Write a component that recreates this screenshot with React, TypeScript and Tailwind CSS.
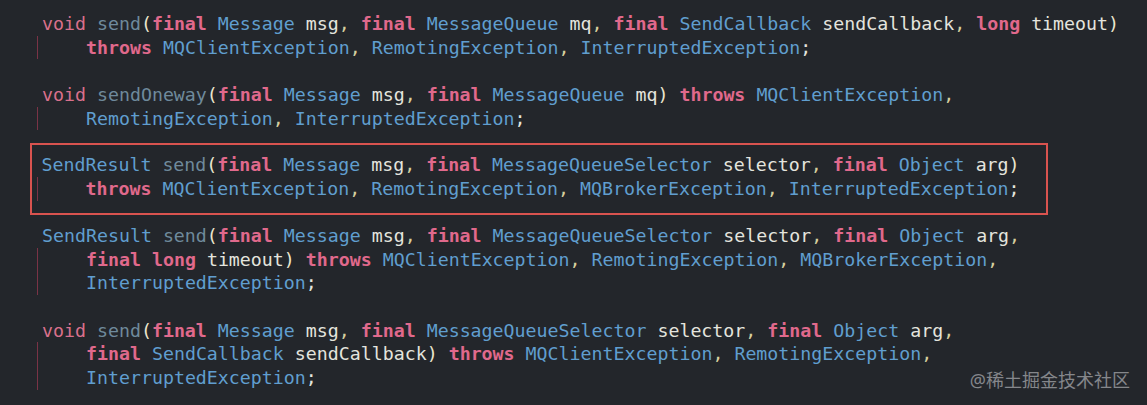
import { JSX } from "react";

type Kind = "kw" | "kwb" | "type" | "fn" | "id" | "paren" | "comma" | "semi" | "space";

const KEYWORDS = new Set(["void"]);
const BOLD_KEYWORDS = new Set(["final", "throws", "long"]);
const METHODS = new Set(["send", "sendOneway"]);

const kindClass: Record<Kind, string> = {
  kw: "text-[#d9708c]",
  kwb: "text-[#e0698c] font-semibold",
  type: "text-[#609ecf]",
  fn: "text-[#6f8a9c]",
  id: "text-[#e4e4de]",
  paren: "text-[#ece6cf]",
  comma: "text-[#d6cf9e]",
  semi: "text-[#e4e4de]",
  space: "",
};

function tokenize(line: string): { text: string; kind: Kind }[] {
  const parts = line.match(/[A-Za-z_]+|\s+|[(),;]/g) ?? [];
  return parts.map((text) => {
    if (/^\s+$/.test(text)) return { text, kind: "space" };
    if (text === "(" || text === ")") return { text, kind: "paren" };
    if (text === ",") return { text, kind: "comma" };
    if (text === ";") return { text, kind: "semi" };
    if (KEYWORDS.has(text)) return { text, kind: "kw" };
    if (BOLD_KEYWORDS.has(text)) return { text, kind: "kwb" };
    if (METHODS.has(text)) return { text, kind: "fn" };
    if (/^[A-Z]/.test(text)) return { text, kind: "type" };
    return { text, kind: "id" };
  });
}

function CodeLine({ line }: { line: string }): JSX.Element {
  return (
    <div className="h-[23.67px] whitespace-pre">
      {tokenize(line).map((t, i) => (
        <span key={i} className={kindClass[t.kind]}>
          {t.text}
        </span>
      ))}
    </div>
  );
}

function Block({ lines }: { lines: string[] }): JSX.Element {
  const [first, ...rest] = lines;
  return (
    <div>
      <CodeLine line={first} />
      <div className="-ml-[5px] border-l border-[#7a3346] pl-[48px]">
        {rest.map((l, i) => (
          <CodeLine key={i} line={l} />
        ))}
      </div>
    </div>
  );
}

const blocks: string[][] = [
  [
    "void send(final Message msg, final MessageQueue mq, final SendCallback sendCallback, long timeout)",
    "throws MQClientException, RemotingException, InterruptedException;",
  ],
  [
    "void sendOneway(final Message msg, final MessageQueue mq) throws MQClientException,",
    "RemotingException, InterruptedException;",
  ],
  [
    "SendResult send(final Message msg, final MessageQueueSelector selector, final Object arg)",
    "throws MQClientException, RemotingException, MQBrokerException, InterruptedException;",
  ],
  [
    "SendResult send(final Message msg, final MessageQueueSelector selector, final Object arg,",
    "final long timeout) throws MQClientException, RemotingException, MQBrokerException,",
    "InterruptedException;",
  ],
  [
    "void send(final Message msg, final MessageQueueSelector selector, final Object arg,",
    "final SendCallback sendCallback) throws MQClientException, RemotingException,",
    "InterruptedException;",
  ],
];

export default function App(): JSX.Element {
  return (
    <div className="relative h-[405px] w-[1147px] overflow-hidden bg-[#23262b]">
      <div
        className="flex flex-col gap-[23.67px] pl-[42px] pt-[12px] text-[18.25px] leading-[23.67px]"
        style={{ fontFamily: '"DejaVu Sans Mono", "Liberation Mono", monospace' }}
      >
        {blocks.map((b, i) =>
          i === 2 ? (
            <div
              key={i}
              className="-mt-[11px] -mb-[15px] -ml-[12px] w-[1018px] border-[2.5px] border-[#d9534f] pt-[8.5px] pb-[12.5px] pl-[9.5px]"
            >
              <Block lines={b} />
            </div>
          ) : (
            <Block key={i} lines={b} />
          ),
        )}
      </div>
      <div
        className="absolute right-[17px] bottom-[15px] text-[18px] leading-[20px] text-[#85878b]"
        style={{ fontFamily: '"Noto Sans", "Noto Sans CJK SC", sans-serif' }}
      >
        @稀土掘金技术社区
      </div>
    </div>
  );
}
